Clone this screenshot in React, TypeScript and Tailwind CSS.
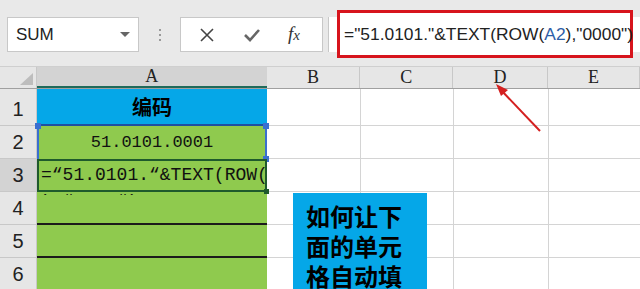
import React from "react";

const rows = [
  { n: "1", h: "h-[37px]" },
  { n: "2", h: "h-[33px]" },
  { n: "3", h: "h-[33px]" },
  { n: "4", h: "h-[33px]" },
  { n: "5", h: "h-[33px]" },
  { n: "6", h: "h-[33px]" },
];

const sans = { fontFamily: '"Liberation Sans", "Noto Sans", sans-serif' };

function Toolbar() {
  return (
    <div className="relative h-[67px] bg-[#e9e9e9] border-b border-[#cfcfcf] flex items-start pt-[17px]">
      <div className="ml-[7px] w-[132px] h-[35px] bg-white border border-[#c8c8c8] flex items-center justify-between pl-[8px] pr-[8px]">
        <span className="text-[17px] text-[#222]" style={sans}>SUM</span>
        <span className="w-0 h-0 border-l-[5px] border-r-[5px] border-t-[5px] border-l-transparent border-r-transparent border-t-[#666]" />
      </div>
      <div className="w-[41px] h-[35px] flex flex-col items-center justify-center gap-[3px]">
        <span className="w-[2px] h-[2px] bg-[#9a9a9a]" />
        <span className="w-[2px] h-[2px] bg-[#9a9a9a]" />
        <span className="w-[2px] h-[2px] bg-[#9a9a9a]" />
      </div>
      <div className="w-[143px] h-[35px] bg-white border border-[#c8c8c8] flex items-center">
        <svg width="16" height="16" viewBox="0 0 16 16" className="ml-[18px]">
          <path d="M2 2 L14 14 M14 2 L2 14" stroke="#444" strokeWidth="1.6" />
        </svg>
        <svg width="18" height="16" viewBox="0 0 18 16" className="ml-[28px]">
          <path d="M2 8 L7 13 L16 3" stroke="#666" strokeWidth="2.6" fill="none" />
        </svg>
        <span className="ml-[27px] text-[19px] italic text-[#333]" style={{ fontFamily: '"Liberation Serif", serif' }}>
          f<span className="text-[15px]">x</span>
        </span>
      </div>
      <div className="ml-[5px] flex-1 h-[35px] bg-white border-l border-[#c8c8c8]" />
      <div className="absolute left-[337px] top-[10px] w-[296px] h-[48px] border-[3px] border-[#d7141c] bg-white flex items-center pl-[4px]">
        <span className="text-[17.4px] text-[#222] whitespace-nowrap" style={sans}>
          ="51.0101."&amp;TEXT(ROW(<span className="text-[#2d5ea8]">A2</span>),"0000")
        </span>
      </div>
    </div>
  );
}

function ColHeader() {
  const serif = { fontFamily: '"Liberation Serif", "DejaVu Serif", serif' };
  return (
    <div className="flex h-[22px] bg-[#e6e6e6] border-b border-[#a0a0a0]">
      <div className="w-[37px] relative border-r border-[#c8c8c8]">
        <span className="absolute right-[3px] bottom-[3px] w-0 h-0" style={{ borderBottom: "12px solid #bdbdbd", borderLeft: "13px solid transparent" }} />
      </div>
      <div className="w-[230px] bg-[#d3d3d3] border-b-2 border-[#1e6a5a] flex items-center justify-center text-[18px] text-[#222]" style={serif}>A</div>
      <div className="w-[94px] border-r border-[#c8c8c8] flex items-center justify-center text-[18px] text-[#222]" style={serif}>B</div>
      <div className="w-[93px] border-r border-[#c8c8c8] flex items-center justify-center text-[18px] text-[#222]" style={serif}>C</div>
      <div className="w-[95px] border-r border-[#c8c8c8] flex items-center justify-center text-[18px] text-[#222]" style={serif}>D</div>
      <div className="w-[92px] shrink-0 border-r border-[#c8c8c8] flex items-center justify-center text-[18px] text-[#222]" style={serif}>E</div>
    </div>
  );
}

function CellA({ i }: { i: number }) {
  const mono = { fontFamily: '"Liberation Mono", "DejaVu Sans Mono", "Noto Sans CJK SC", monospace' };
  if (i === 0)
    return (
      <div className="w-[230px] h-full bg-[#05a7e8] border-b-2 border-[#1f4fa0] flex items-center justify-center">
        <span className="text-[20px] font-bold text-black" style={{ fontFamily: '"Noto Sans CJK SC", sans-serif' }}>编码</span>
      </div>
    );
  if (i === 1)
    return (
      <div className="relative w-[230px] h-full bg-[#8fca4e] border-x-2 border-[#3a6fd0] flex items-center justify-center">
        <span className="text-[17px] text-[#111]" style={mono}>51.0101.0001</span>
        <span className="absolute -left-[4px] -top-[3px] w-[6px] h-[6px] bg-[#3a6fd0]" />
        <span className="absolute -right-[4px] -top-[3px] w-[6px] h-[6px] bg-[#3a6fd0]" />
        <span className="absolute -right-[4px] -bottom-[3px] w-[6px] h-[6px] bg-[#3a6fd0]" />
      </div>
    );
  if (i === 2)
    return (
      <div className="relative w-[230px] h-full bg-[#8fca4e] border-2 border-[#1f5a2c]">
        <div className="absolute left-[2px] top-0 w-[226px] h-[34px] overflow-hidden">
          <div className="text-[18px] leading-[27px] text-[#111] whitespace-pre pt-[1px]" style={mono}>
            {"=“51.0101.“&TEXT(ROW(\n),“0000“)"}
          </div>
        </div>
        <span className="absolute -right-[4px] -bottom-[4px] w-[5px] h-[5px] bg-[#1f5a2c]" />
      </div>
    );
  return <div className="w-[230px] h-full bg-[#8fca4e] border-b-2 border-[#1b1b1b]" />;
}

export default function App() {
  return (
    <div className="relative w-[640px] h-[289px] overflow-hidden bg-white">
      <Toolbar />
      <ColHeader />
      {rows.map((r, i) => (
        <div key={r.n} className={`flex ${r.h}`}>
          <div
            className={`w-[37px] h-full border-r border-b border-[#c8c8c8] flex items-end justify-center pb-[1px] text-[20px] text-[#222] ${i === 2 ? "bg-[#d3d3d3]" : "bg-[#e6e6e6]"}`}
            style={sans}
          >
            {r.n}
          </div>
          <CellA i={i} />
          <div className="w-[94px] h-full border-r border-b border-[#d4d4d4]" />
          <div className="w-[93px] h-full border-r border-b border-[#d4d4d4]" />
          <div className="w-[95px] h-full border-r border-b border-[#d4d4d4]" />
          <div className="flex-1 h-full border-b border-[#d4d4d4]" />
        </div>
      ))}

      <div className="absolute left-[293px] top-[193px] w-[134px] h-[110px] bg-[#05a7e8] pl-[13px] pt-[8px]">
        <div className="text-[24px] leading-[30px] font-bold text-black" style={{ fontFamily: '"Noto Sans CJK SC", sans-serif' }}>
          如何让下
          <br />
          面的单元
          <br />
          格自动填
        </div>
      </div>

      <svg className="absolute left-0 top-0" width="640" height="289">
        <line x1="540" y1="131" x2="500" y2="89" stroke="#d42020" strokeWidth="2" />
        <polygon points="496,84 508,90 501,96" fill="#d42020" />
      </svg>
    </div>
  );
}
